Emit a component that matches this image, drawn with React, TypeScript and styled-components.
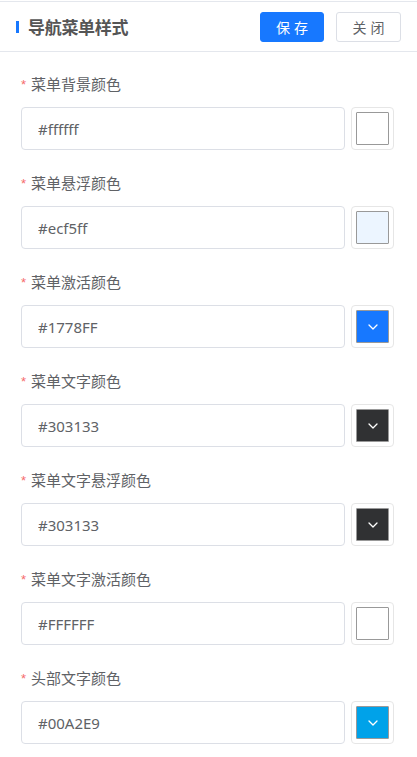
import React from "react";
import styled, { createGlobalStyle } from "styled-components";

const Global = createGlobalStyle`
  html, body { margin: 0; padding: 0; background: #fff; }
  body { font-family: "Noto Sans", "Noto Sans CJK SC", sans-serif; }
  * { box-sizing: border-box; }
`;

const Page = styled.div`
  width: 417px;
  padding-top: 1px;
  background: #fff;
`;

const Header = styled.div`
  height: 51px;
  border-top: 1px solid #e4e7ed;
  border-bottom: 1px solid #e4e7ed;
  display: flex;
  align-items: center;
  padding: 0 16px 0 16px;
`;

const TitleBar = styled.span`
  width: 3px;
  height: 12px;
  background: #1778ff;
  margin-right: 9px;
`;

const Title = styled.h1`
  margin: 0;
  flex: 1;
  font-size: 17px;
  font-weight: 700;
  color: #555;
  font-family: "Noto Sans CJK SC", sans-serif;
  letter-spacing: -0.3px;
`;

const Btn = styled.button<{ $primary?: boolean }>`
  height: 30px;
  width: ${(p) => (p.$primary ? "64px" : "65px")};
  margin-left: ${(p) => (p.$primary ? "0" : "12px")};
  border-radius: 3px;
  border: 1px solid ${(p) => (p.$primary ? "#1778ff" : "#dcdfe6")};
  background: ${(p) => (p.$primary ? "#1778ff" : "#fff")};
  color: ${(p) => (p.$primary ? "#fff" : "#606266")};
  font-family: "Noto Sans CJK SC", sans-serif;
  font-size: 14px;
  letter-spacing: 4px;
  padding: 0 0 0 4px;
  display: flex;
  align-items: center;
  justify-content: center;
`;

const Form = styled.div`
  padding: 21px 23px 0 21px;
  display: flex;
  flex-direction: column;
  gap: 22px;
`;

const Item = styled.div`
  display: flex;
  flex-direction: column;
  gap: 12px;
`;

const Label = styled.label`
  height: 22px;
  line-height: 22px;
  font-size: 15px;
  color: #606266;
  font-family: "Noto Sans CJK SC", sans-serif;
  display: flex;
  align-items: center;
`;

const Star = styled.span`
  color: #f56c6c;
  font-size: 13px;
  line-height: 13px;
  margin-right: 5px;
  margin-top: 0;
  font-family: "Liberation Sans", sans-serif;
`;

const Row = styled.div`
  display: flex;
  gap: 6px;
`;

const Input = styled.input`
  flex: 1;
  height: 43px;
  border: 1px solid #dcdfe6;
  border-radius: 4px;
  padding: 0 16px;
  font-family: "Noto Sans", "Noto Sans CJK SC", sans-serif;
  font-size: 15px;
  color: #606266;
  outline: none;
  width: 0;
`;

const Picker = styled.div`
  width: 43px;
  height: 43px;
  border: 1px solid #e6e6e6;
  border-radius: 4px;
  padding: 4px;
  flex: none;
`;

const Swatch = styled.div<{ $c: string }>`
  width: 100%;
  height: 100%;
  border: 1px solid #999;
  border-radius: 1px;
  background: ${(p) => p.$c};
  display: flex;
  align-items: center;
  justify-content: center;
`;

const fields = [
  { label: "菜单背景颜色", value: "#ffffff" },
  { label: "菜单悬浮颜色", value: "#ecf5ff" },
  { label: "菜单激活颜色", value: "#1778FF" },
  { label: "菜单文字颜色", value: "#303133" },
  { label: "菜单文字悬浮颜色", value: "#303133" },
  { label: "菜单文字激活颜色", value: "#FFFFFF" },
  { label: "头部文字颜色", value: "#00A2E9" },
];

const isLight = (hex: string) => {
  const h = hex.replace("#", "");
  const r = parseInt(h.slice(0, 2), 16);
  const g = parseInt(h.slice(2, 4), 16);
  const b = parseInt(h.slice(4, 6), 16);
  return r * 0.299 + g * 0.587 + b * 0.114 > 200;
};

const Chevron = () => (
  <svg width="10" height="6" viewBox="0 0 10 6" fill="none">
    <path d="M1 1l4 4 4-4" stroke="#fff" strokeWidth="1.3" strokeLinecap="round" strokeLinejoin="round" />
  </svg>
);

export default function App() {
  return (
    <Page>
      <Global />
      <Header>
        <TitleBar />
        <Title>导航菜单样式</Title>
        <Btn $primary>保存</Btn>
        <Btn>关闭</Btn>
      </Header>
      <Form>
        {fields.map((f, i) => (
          <Item key={i}>
            <Label>
              <Star>*</Star>
              {f.label}
            </Label>
            <Row>
              <Input defaultValue={f.value} />
              <Picker>
                <Swatch $c={f.value}>{!isLight(f.value) && <Chevron />}</Swatch>
              </Picker>
            </Row>
          </Item>
        ))}
      </Form>
    </Page>
  );
}
